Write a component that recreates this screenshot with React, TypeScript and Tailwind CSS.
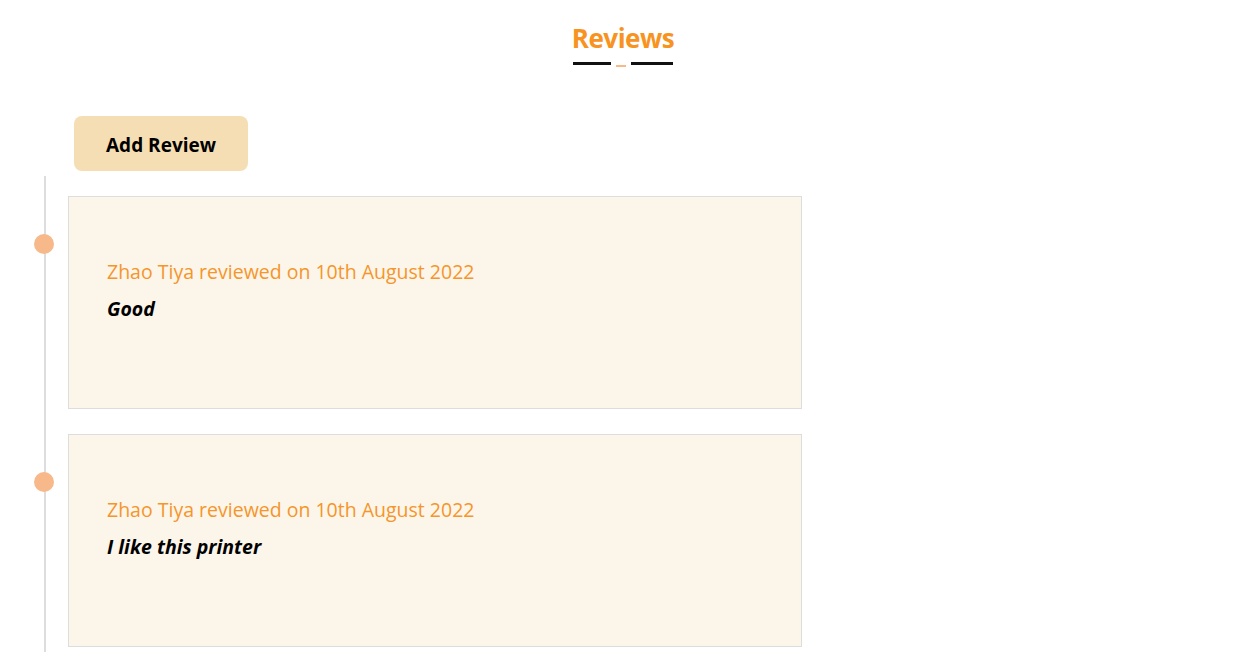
import React from "react";

const reviews = [
  { name: "Zhao Tiya", date: "10th August 2022", text: "Good" },
  { name: "Zhao Tiya", date: "10th August 2022", text: "I like this printer" },
];

export default function App() {
  return (
    <div className="w-[1247px] h-[652px] overflow-hidden bg-white" style={{ fontFamily: '"Open Sans", "Noto Sans", sans-serif' }}>
      <div className="flex flex-col items-center pt-[20px] pr-[1px]">
        <h2 className="text-[26px] leading-[36px] font-bold text-[#f7931e] tracking-[-0.5px]">Reviews</h2>
        <div className="flex items-start gap-[5px] mt-[6px]">
          <div className="w-[38px] h-[3px] bg-[#111]" />
          <div className="w-[10px] h-[2px] mt-[3px] bg-[#f7b98a]" />
          <div className="w-[42px] h-[3px] bg-[#111]" />
        </div>
      </div>
      <div className="pl-[74px] mt-[49px]">
        <button className="w-[174px] h-[55px] pt-[3px] rounded-[8px] bg-[#f5deb3] text-[19px] font-bold text-black">
          Add Review
        </button>
      </div>
      <div className="ml-[44px] mt-[5px] border-l-2 border-[#dddddd] pt-[20px] pb-[30px] flex flex-col gap-[25px]">
        {reviews.map((r, i) => (
          <div key={i} className="relative ml-[22px]">
            <div className="absolute left-[-34px] top-[38px] w-[20px] h-[20px] rounded-full bg-[#f7b98a]" />
            <div className="w-[734px] h-[213px] bg-[#fcf5ea] border border-[#dddddd] pl-[38px] pt-[62px]">
              <div className="text-[19.5px] leading-[26px] text-[#f5952b]">
                {r.name} reviewed on {r.date}
              </div>
              <div className="mt-[11px] text-[19.5px] leading-[26px] font-bold italic text-black">{r.text}</div>
            </div>
          </div>
        ))}
      </div>
    </div>
  );
}
